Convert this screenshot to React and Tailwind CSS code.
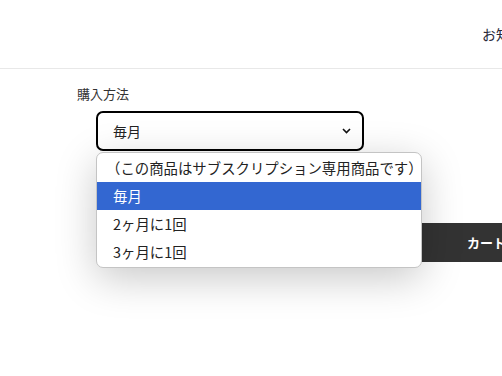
export default function App() {
  const options = ["（この商品はサブスクリプション専用商品です）", "毎月", "2ヶ月に1回", "3ヶ月に1回"];

  return (
    <div className="relative w-[502px] h-[376px] overflow-hidden bg-white text-[#222] font-['Noto_Sans_CJK_JP','Noto_Sans',sans-serif]">
      {/* Header */}
      <header className="h-[69px] border-b border-[#e8e8e8] flex items-center">
        <span className="ml-[482px] shrink-0 whitespace-nowrap text-[14px] text-[#2a2a3a]">お知らせ</span>
      </header>

      {/* Purchase method */}
      <div className="pt-[16px]">
        <p className="pl-[77px] text-[13px] leading-[18px] text-[#333]">購入方法</p>
        <div className="ml-[96px] mt-[8px] w-[268px] h-[40px] border-2 border-black rounded-[7px] flex items-center justify-between pl-[15px] pr-[11px]">
          <span className="text-[14px]">毎月</span>
          <svg width="9" height="6" viewBox="0 0 9 6" fill="none" stroke="#111" strokeWidth="1.6">
            <path d="M1 1l3.5 3.5L8 1" />
          </svg>
        </div>

        {/* Cart button */}
        <div className="mt-[72px] ml-[330px] w-[260px] h-[39px] bg-[#333] flex items-center pl-[137px]">
          <span className="text-white font-bold text-[13px] whitespace-nowrap">カートに入れる</span>
        </div>
      </div>

      {/* Native select popup */}
      <div className="absolute left-[96px] top-[152px] w-[326px] bg-white border border-[#c4c4c4] rounded-[7px] py-[1px] shadow-[0_10px_40px_rgba(0,0,0,0.22)] overflow-hidden">
        {options.map((o, i) => (
          <div
            key={o}
            className={`h-[28px] flex items-center whitespace-nowrap text-[14.4px] ${
              i === 0 ? "pl-[9px]" : "pl-[16px]"
            } ${i === 1 ? "bg-[#3367d1] text-white" : "text-[#222]"}`}
          >
            {o}
          </div>
        ))}
      </div>
    </div>
  );
}
